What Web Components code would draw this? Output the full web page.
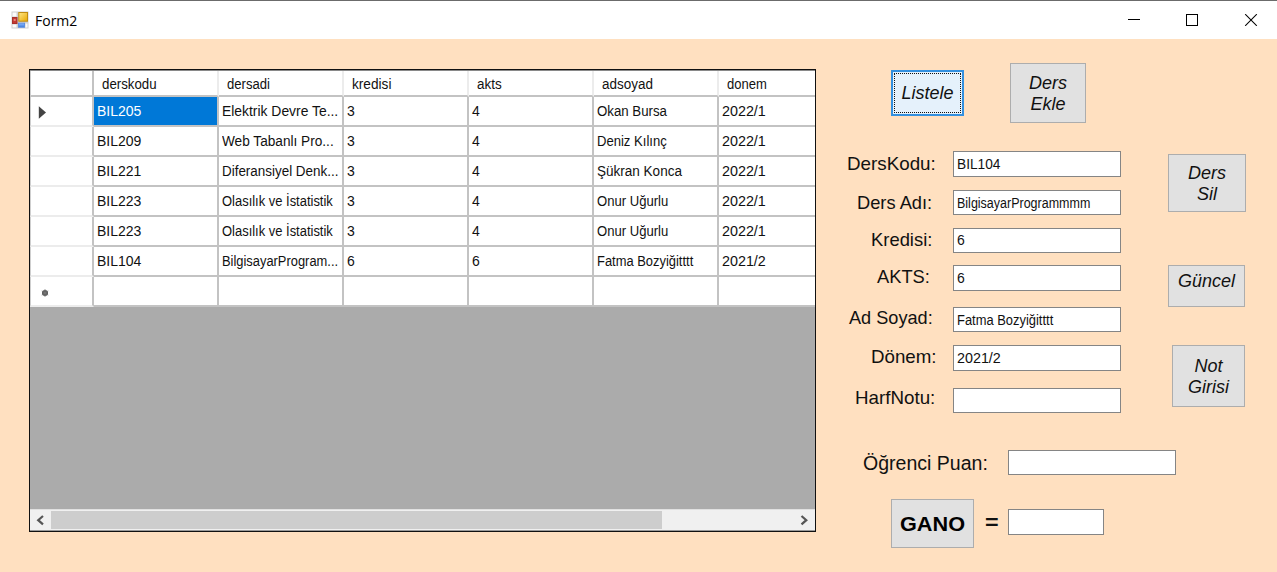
<!DOCTYPE html>
<html lang="tr">
<head>
<meta charset="utf-8">
<title>Form2</title>
<style>
html,body{margin:0;height:100%;overflow:hidden}
body{font-family:"Liberation Sans",Arial,sans-serif;color:#111}
</style>
</head>
<body>
<form-window></form-window>
<script>
const define = (name, html, setup) => customElements.define(name, class extends HTMLElement {
  connectedCallback() {
    if (this.shadowRoot) return;
    const root = this.attachShadow({ mode: 'open' });
    root.innerHTML = typeof html === 'function' ? html(this) : html;
    if (setup) setup(this, root);
  }
});

/* One line of text squeezed or stretched to the width given by "w". */
define('fit-text', `<style>
  :host{display:block;white-space:pre;flex:none}
  span{display:inline-block;transform-origin:0 50%}
</style><span><slot></slot></span>`, (el, root) => {
  const w = +el.getAttribute('w'), dy = el.getAttribute('dy') || 0;
  const span = root.querySelector('span');
  el.style.width = w + 'px';
  span.style.transform = `translateY(${dy}px) scaleX(${w / span.offsetWidth})`;
});

define('title-bar', `<style>
  :host{display:flex;align-items:center;height:38px;border-top:1px solid #6b6b6b;background:#fff;color:#000;font:15px/38px "Open Sans",sans-serif}
  .icon{margin:0 6px 0 11px}
  .gap{flex:1}
  .caps{margin-right:19px}
  svg{display:block;flex:none}
</style>
<svg class="icon" width="18" height="18" viewBox="0 0 18 18">
  <defs>
    <linearGradient id="y" x2="1" y2="1"><stop stop-color="#ffe88a"/><stop offset="1" stop-color="#e9a800"/></linearGradient>
    <linearGradient id="b" x2="0" y2="1"><stop stop-color="#8ebcff"/><stop offset="1" stop-color="#3a78dc"/></linearGradient>
  </defs>
  <rect x=".5" y=".5" width="17" height="17" fill="#cfcfcf"/>
  <path d="M1.5 1.5h4v4h-4zM1.5 13.5h4v3h-4zM14.5 12.5h2v4h-2z" fill="#fbfbfb"/>
  <rect x="1.5" y="6.5" width="4.5" height="6" fill="#c33a33" stroke="#a8302c"/>
  <rect x="2.7" y="8" width="2" height="2" fill="#e88078"/>
  <rect x="7.8" y="1.5" width="8.7" height="8.7" fill="url(#y)" stroke="#c08c12"/>
  <rect x="7.5" y="12.2" width="6" height="4" fill="url(#b)" stroke="#5d8fe0"/>
</svg>
<fit-text w="42">Form2</fit-text>
<div class="gap"></div>
<svg class="caps" width="130" height="12" viewBox="0 0 130 12">
  <path d="M0 5.5h12" stroke="#000"/><rect x="58.5" y=".5" width="11" height="11" fill="none" stroke="#000"/>
  <path d="M117.2 .2l11.6 11.6M128.8 .2L117.2 11.8" stroke="#000" stroke-width="1.1"/>
</svg>`);

define('data-cell', `<style>
  :host{box-sizing:border-box;width:125px;flex:none;display:block;overflow:hidden;border:solid #c3c3c3;border-width:0 2px 2px 0;padding-left:3px;line-height:28px;font-size:14px;background:#fff}
  :host([selected]){background:#0078d7;color:#fff}
  :host([head]){border-right-color:#ececec;padding-left:8px;line-height:26px}
  :host([rowhead]){width:64px;padding:0;border-left:1px solid #cfcfcf;border-bottom-color:#ececec}
  :host([corner]){border-bottom-color:#c3c3c3}
  :host([last]){width:96px;border-right:0}
</style><slot></slot>`);

define('data-grid', () => {
  const heads = [['derskodu',55],['dersadi',43],['kredisi',39],['akts',25],['adsoyad',51],['donem',40]];
  const rows = [
    [['BIL205',44],['Elektrik Devre Te...',116],['3',8],['4',8],['Okan Bursa',70],['2022/1',44]],
    [['BIL209',44],['Web Tabanlı Pro...',112],['3',8],['4',8],['Deniz Kılınç',70],['2022/1',44]],
    [['BIL221',44],['Diferansiyel Denk...',116],['3',8],['4',8],['Şükran Konca',85],['2022/1',44]],
    [['BIL223',44],['Olasılık ve İstatistik',111],['3',8],['4',8],['Onur Uğurlu',71],['2022/1',44]],
    [['BIL223',44],['Olasılık ve İstatistik',111],['3',8],['4',8],['Onur Uğurlu',71],['2022/1',44]],
    [['BIL104',44],['BilgisayarProgram...',116],['6',8],['6',8],['Fatma Bozyiğitttt',96],['2021/2',44]],
    ['','','','','','']
  ];
  const cell = (c, attrs) => `<data-cell ${attrs}>${c ? `<fit-text w="${c[1]}">${c[0]}</fit-text>` : ''}</data-cell>`;
  const mark = i => i === 0
    ? '<svg width="20" height="28" viewBox="0 0 20 28"><path d="M7.8 9.3v12.4L15 15.5z" fill="#444"/></svg>'
    : i === 6 ? '<svg width="24" height="28" viewBox="0 0 24 28"><circle cx="14" cy="16" r="3" fill="#555"/><path d="M14 12.3v7.4M10.8 14l6.4 4M17.2 14l-6.4 4" stroke="#777" stroke-width="1"/></svg>' : '';
  return `<style>
    :host{box-sizing:border-box;display:flex;flex-direction:column;width:787px;height:463px;border:1px solid #111;outline:0;background:#ababab;box-shadow:inset 0 1px #8a8a8a}
    .row{display:flex;height:30px}
    .head{height:26px;margin-top:1px}
    svg{display:block}
    .fill{flex:1}
    .bar{display:flex;align-items:center;height:20px;background:#f0f0f0;border-top:1px solid #e0e0e0;border-bottom:1px solid #999}
    .thumb{width:611px;height:18px;background:#cdcdcd}
    .space{flex:1}
  </style>
  <div class="row head"><data-cell rowhead corner></data-cell>${heads.map((h,i)=>cell(h,'head'+(i===5?' last':''))).join('')}</div>
  ${rows.map((r,i)=>`<div class="row"><data-cell rowhead>${mark(i)}</data-cell>${r.map((c,j)=>cell(c,(i===0&&j===0?'selected ':'')+(j===5?'last':''))).join('')}</div>`).join('')}
  <div class="fill"></div>
  <div class="bar">
    <svg width="21" height="18" viewBox="0 0 21 18"><path d="M13 5L8.2 9.2 13 13.4" fill="none" stroke="#555" stroke-width="2.2"/></svg>
    <div class="thumb"></div><div class="space"></div>
    <svg width="21" height="18" viewBox="0 0 21 18"><path d="M7.5 5l4.8 4.2-4.8 4.2" fill="none" stroke="#555" stroke-width="2.2"/></svg>
  </div>`;
});

define('form-button', `<style>
  :host{box-sizing:border-box;display:flex;flex-direction:column;align-items:center;justify-content:center;border:1px solid #adadad;background:#e1e1e1;font:italic 18px/21px "Liberation Sans",sans-serif;flex:none}
  :host([focused]){border:2px solid #3390df;background:#e5f1fb;outline:1px dotted #111;outline-offset:-4px}
  :host([bold]){font:bold 20px/24px "Liberation Sans",sans-serif;color:#000}
  :host([top]){justify-content:flex-start;padding-top:4px}
</style><slot></slot>`);

define('text-box', `<style>
  :host{box-sizing:border-box;display:block;flex:none;width:168px;height:25px;border:1px solid #858585;background:#fff;padding-left:3px;font-size:14px;line-height:24px}
  :host([tall]){height:26px}
</style><slot></slot>`);

define('form-field', el => `<style>
  :host{display:flex;line-height:25px;font-size:19px}
  .label{box-sizing:border-box;width:137px;flex:none;display:flex;justify-content:flex-end;padding-right:${el.getAttribute('pad')}px}
</style>
<div class="label"><fit-text w="${el.getAttribute('lw')}" dy="${el.getAttribute('dy')||0}">${el.getAttribute('label')}</fit-text></div>
<text-box ${el.hasAttribute('tall')?'tall':''}><slot></slot></text-box>`);

define('form-window', `<style>
  :host{display:flex;flex-direction:column;width:1277px;height:572px;background:#ffe0c0}
  .body{display:flex;padding:30px 0 0 29px}
  .side{width:461px;margin-top:-6px;flex:none}
  .top{display:flex;align-items:flex-start;height:88px;padding-left:75px}
  .mid{display:flex;height:299px}
  .fields{width:305px;flex:none}
  .actions{margin-left:47px;padding-top:3px}
  .score{display:flex;padding-left:47px;font-size:20px;line-height:26px}
  .score text-box{margin-left:20px}
  .gano{display:flex;padding-left:75px;margin-top:23px;align-items:flex-start}
</style>
<title-bar></title-bar>
<div class="body">
  <data-grid></data-grid>
  <div class="side">
    <div class="top">
      <form-button focused style="width:73px;height:46px;margin:7px 46px 0 0"><fit-text w="52">Listele</fit-text></form-button>
      <form-button style="width:76px;height:60px"><fit-text w="38" dy="1">Ders</fit-text><fit-text w="35" dy="1">Ekle</fit-text></form-button>
    </div>
    <div class="mid">
      <div class="fields">
        <form-field label="DersKodu:" lw="89" pad="17" tall style="margin-bottom:13px"><fit-text w="43">BIL104</fit-text></form-field>
        <form-field label="Ders Adı:" lw="75" pad="21" style="margin-bottom:13px"><fit-text w="133">BilgisayarProgrammmm</fit-text></form-field>
        <form-field label="Kredisi:" lw="61" pad="21" dy="-1.5" style="margin-bottom:12px"><fit-text w="8" dy="-1">6</fit-text></form-field>
        <form-field label="AKTS:" lw="53" pad="23" dy="-1" tall style="margin-bottom:16px"><fit-text w="8">6</fit-text></form-field>
        <form-field label="Ad Soyad:" lw="84" pad="20" dy="-2" style="margin-bottom:13px"><fit-text w="96">Fatma Bozyiğitttt</fit-text></form-field>
        <form-field label="Dönem:" lw="66" pad="16" dy="-1" tall style="margin-bottom:17px"><fit-text w="44">2021/2</fit-text></form-field>
        <form-field label="HarfNotu:" lw="80" pad="18" dy="-3"></form-field>
      </div>
      <div class="actions">
        <form-button style="width:78px;height:58px;margin-bottom:53px"><fit-text w="38" dy="1">Ders</fit-text><fit-text w="20" dy="1">Sil</fit-text></form-button>
        <form-button top style="width:77px;height:42px;margin-bottom:38px"><fit-text w="57" dy="1">Güncel</fit-text></form-button>
        <form-button style="width:73px;height:62px;margin-left:4px"><fit-text w="28" dy="1">Not</fit-text><fit-text w="41" dy="1">Girisi</fit-text></form-button>
      </div>
    </div>
    <div class="score"><fit-text w="125">Öğrenci Puan:</fit-text><text-box></text-box></div>
    <div class="gano">
      <form-button bold style="width:83px;height:49px"><fit-text w="65">GANO</fit-text></form-button>
      <fit-text w="14" dy="-1" style="font:bold 20px/49px 'Liberation Sans',sans-serif;margin:0 9px 0 11px">=</fit-text>
      <text-box tall style="width:96px;margin-top:10px"></text-box>
    </div>
  </div>
</div>`);
</script>
</body>
</html>
